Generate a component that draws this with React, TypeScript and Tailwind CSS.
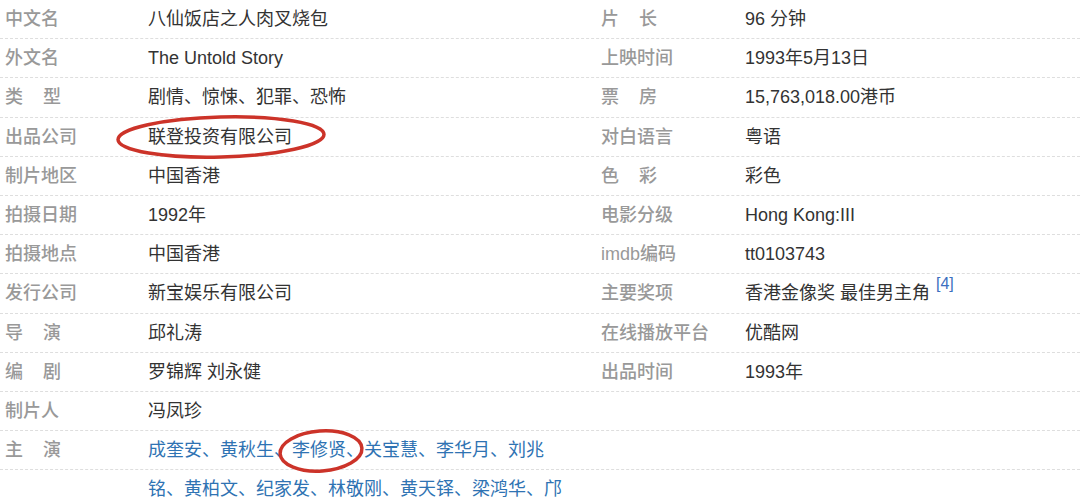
import React from "react";

type Cell = { label?: React.ReactNode; value?: React.ReactNode };

const Spaced = ({ a, b }: { a: string; b: string }) => (
  <span className="flex gap-[20px]">
    <span>{a}</span>
    <span>{b}</span>
  </span>
);

const Link = ({ children }: { children: React.ReactNode }) => (
  <span className="text-[#2f73b3]">{children}</span>
);

const rows: { left: Cell; right: Cell }[] = [
  { left: { label: "中文名", value: "八仙饭店之人肉叉烧包" }, right: { label: <Spaced a="片" b="长" />, value: "96 分钟" } },
  { left: { label: "外文名", value: "The Untold Story" }, right: { label: "上映时间", value: "1993年5月13日" } },
  { left: { label: <Spaced a="类" b="型" />, value: "剧情、惊悚、犯罪、恐怖" }, right: { label: <Spaced a="票" b="房" />, value: "15,763,018.00港币" } },
  { left: { label: "出品公司", value: "联登投资有限公司" }, right: { label: "对白语言", value: "粤语" } },
  { left: { label: "制片地区", value: "中国香港" }, right: { label: <Spaced a="色" b="彩" />, value: "彩色" } },
  { left: { label: "拍摄日期", value: "1992年" }, right: { label: "电影分级", value: "Hong Kong:III" } },
  { left: { label: "拍摄地点", value: "中国香港" }, right: { label: "imdb编码", value: "tt0103743" } },
  {
    left: { label: "发行公司", value: "新宝娱乐有限公司" },
    right: {
      label: "主要奖项",
      value: (
        <span className="flex items-start">
          <span>香港金像奖 最佳男主角</span>
          <span className="ml-[6px] -mt-[8px] text-[16px] text-[#3b6fc0]">[4]</span>
        </span>
      ),
    },
  },
  { left: { label: <Spaced a="导" b="演" />, value: "邱礼涛" }, right: { label: "在线播放平台", value: "优酷网" } },
  { left: { label: <Spaced a="编" b="剧" />, value: "罗锦辉 刘永健" }, right: { label: "出品时间", value: "1993年" } },
  { left: { label: "制片人", value: "冯凤珍" }, right: {} },
  { left: { label: <Spaced a="主" b="演" />, value: <Link>成奎安、黄秋生、李修贤、关宝慧、李华月、刘兆</Link> }, right: {} },
  { left: { value: <Link>铭、黄柏文、纪家发、林敬刚、黄天铎、梁鸿华、邝</Link> }, right: {} },
];

export default function App() {
  return (
    <div
      className="relative w-[1080px] h-[504px] overflow-hidden bg-white"
      style={{ fontFamily: '"Liberation Sans", "Noto Sans CJK SC", sans-serif' }}
    >
      <div className="flex flex-col">
        {rows.map((r, i) => (
          <div
            key={i}
            className="grid grid-cols-[143px_453px_144px_1fr] items-center h-[39.2px] shrink-0 pl-[5px] border-b border-dashed border-[#dedede] text-[18px] leading-none whitespace-nowrap"
          >
            <div className="text-[#999999] font-medium">{r.left.label}</div>
            <div className="text-[#333333]">{r.left.value}</div>
            <div className="text-[#999999] font-medium">{r.right.label}</div>
            <div className="text-[#333333]">{r.right.value}</div>
          </div>
        ))}
      </div>
      <svg className="absolute inset-0 pointer-events-none" width="1080" height="504" viewBox="0 0 1080 504">
        <ellipse cx="221" cy="137" rx="103" ry="20" fill="none" stroke="#cc3329" strokeWidth="3.5" transform="rotate(-1.5 221 137)" />
        <ellipse cx="321" cy="451" rx="41" ry="20" fill="none" stroke="#cc3329" strokeWidth="3.5" transform="rotate(-4 321 451)" />
      </svg>
    </div>
  );
}
